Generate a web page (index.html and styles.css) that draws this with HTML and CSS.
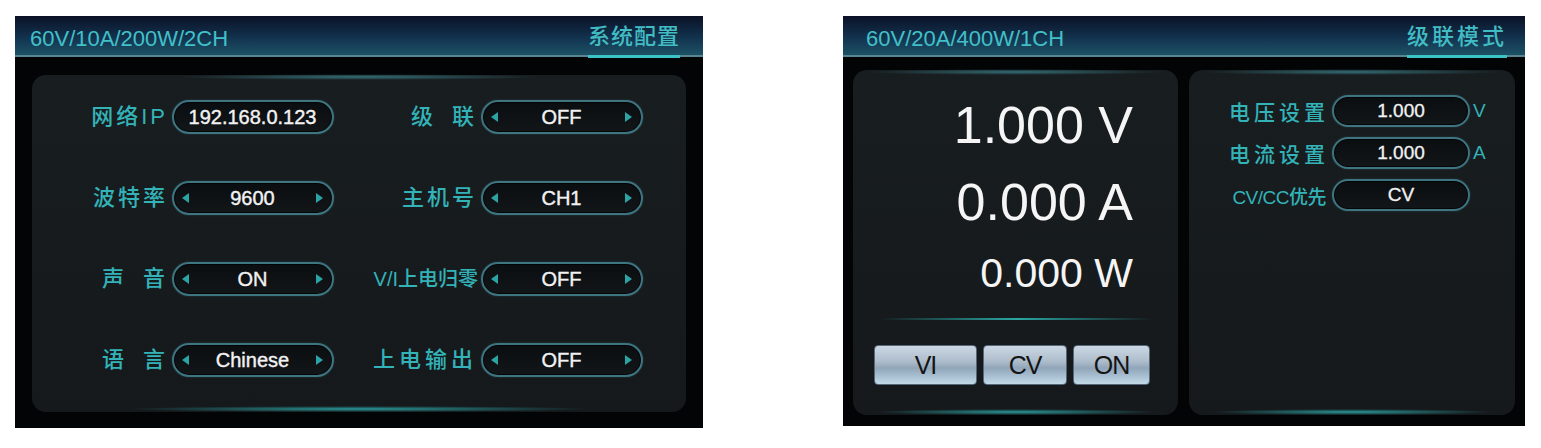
FILE: index.html
```html
<!DOCTYPE html>
<html lang="zh-CN">
<head>
    <meta charset="UTF-8">
    <title>电源界面</title>
    <link rel="stylesheet" href="styles.css">
</head>
<body>
<div class="screen screen-config">
    <div class="topbar">
        <span class="model">60V/10A/200W/2CH</span>
        <span class="page-title">系统配置</span>
    </div>
    <div class="panel config-panel">
        <div class="config-grid">
            <span class="label">网络IP</span>
            <div class="pill"><span class="value">192.168.0.123</span></div>
            <span class="label spaced">级 联</span>
            <div class="pill"><i class="arrow left"></i><span class="value">OFF</span><i class="arrow right"></i></div>

            <span class="label">波特率</span>
            <div class="pill"><i class="arrow left"></i><span class="value">9600</span><i class="arrow right"></i></div>
            <span class="label">主机号</span>
            <div class="pill"><i class="arrow left"></i><span class="value">CH1</span><i class="arrow right"></i></div>

            <span class="label spaced">声 音</span>
            <div class="pill"><i class="arrow left"></i><span class="value">ON</span><i class="arrow right"></i></div>
            <span class="label tight">V/I上电归零</span>
            <div class="pill"><i class="arrow left"></i><span class="value">OFF</span><i class="arrow right"></i></div>

            <span class="label spaced">语 言</span>
            <div class="pill"><i class="arrow left"></i><span class="value">Chinese</span><i class="arrow right"></i></div>
            <span class="label wide">上电输出</span>
            <div class="pill"><i class="arrow left"></i><span class="value">OFF</span><i class="arrow right"></i></div>
        </div>
    </div>
</div>

<div class="screen screen-cascade">
    <div class="topbar">
        <span class="model">60V/20A/400W/1CH</span>
        <span class="page-title">级联模式</span>
    </div>
    <div class="panes">
        <div class="panel readout">
            <div class="readings">
                <div class="reading big">1.000 V</div>
                <div class="reading big">0.000 A</div>
                <div class="reading small">0.000 W</div>
            </div>
            <div class="divider"></div>
            <div class="buttons">
                <button class="key key-vi">VI</button>
                <button class="key key-cv">CV</button>
                <button class="key key-on">ON</button>
            </div>
        </div>
        <div class="panel settings">
            <div class="set-grid">
                <span class="set-label">电压设置</span>
                <div class="box">1.000</div>
                <span class="unit">V</span>

                <span class="set-label">电流设置</span>
                <div class="box">1.000</div>
                <span class="unit">A</span>

                <span class="set-label compact">CV/CC优先</span>
                <div class="box">CV</div>
                <span class="unit"></span>
            </div>
        </div>
    </div>
</div>
</body>
</html>
```

FILE: styles.css
```css
body {
    margin: 0;
    padding: 16px 0 0 15px;
    background: #fff;
    display: flex;
    align-items: flex-start;
    gap: 140px;
    font-family: "Liberation Sans", "Noto Sans CJK SC", sans-serif;
}
.screen {
    background: #030405;
    display: flex;
    flex-direction: column;
}
.screen-config {
    width: 688px;
    height: 412px;
}
.screen-cascade {
    width: 682px;
    height: 410px;
}

/* top bar */
.topbar {
    height: 41px;
    flex: none;
    display: flex;
    justify-content: space-between;
    background: linear-gradient(#0a1126, #133450 55%, #1d5568);
    box-shadow: inset 0 -2px 0 #5a8692;
}
.screen-config .topbar {
    padding: 0 23px 0 15px;
}
.screen-cascade .topbar {
    padding: 0 18px 0 23px;
}
.model {
    padding-top: 12px;
    font-size: 22px;
    line-height: 22px;
    color: #42c0c8;
}
.page-title {
    box-sizing: border-box;
    height: 42px;
    padding-top: 10px;
    font-size: 22px;
    line-height: 22px;
    font-weight: 500;
    color: #42bcc3;
    border-bottom: 3px solid #3cc3c8;
    margin-bottom: -1px;
}
.screen-config .page-title {
    letter-spacing: 1px;
}
.screen-cascade .page-title {
    letter-spacing: 3px;
}

/* panels */
.panel {
    position: relative;
    background: linear-gradient(#181d20, #15191c);
    border-radius: 14px;
}
.panel::before {
    content: "";
    position: absolute;
    top: -1px;
    left: 22%;
    right: 22%;
    height: 6px;
    background: radial-gradient(ellipse at center, rgba(70, 165, 175, 0.6), rgba(70, 165, 175, 0) 70%);
}
.panel::after {
    content: "";
    position: absolute;
    bottom: 0;
    left: 14%;
    right: 14%;
    height: 6px;
    background: radial-gradient(ellipse at center, rgba(45, 175, 175, 0.85), rgba(45, 175, 175, 0) 70%);
}
.config-panel {
    flex: 1;
    margin: 18px 17px 16px;
}

/* config rows */
.config-grid {
    display: grid;
    grid-template-columns: 140px 162px 147px 162px;
    row-gap: 47px;
    padding-top: 25px;
    align-items: center;
}
.label {
    text-align: right;
    padding-right: 4px;
    font-size: 22px;
    line-height: 26px;
    font-weight: 500;
    letter-spacing: 3px;
    color: #33b3b8;
    white-space: nowrap;
}
.label.spaced {
    word-spacing: 7px;
}
.label.tight {
    font-size: 20px;
    letter-spacing: 0;
    padding-right: 3px;
}
.label.wide {
    letter-spacing: 4px;
}
.pill {
    box-sizing: border-box;
    height: 34px;
    border: 2px solid #3d7580;
    border-radius: 17px;
    background: linear-gradient(#0b0e11, #121619);
    box-shadow: inset 0 0 0 1px rgba(0, 0, 0, 0.7), 0 0 2px rgba(90, 150, 160, 0.35);
    display: flex;
    align-items: center;
    justify-content: center;
    padding: 0 9px 0 8px;
}
.pill .value {
    flex: 1;
    text-align: center;
    font-size: 20px;
    color: #f2f2f2;
    -webkit-text-stroke: 0.4px #f2f2f2;
}
.arrow {
    width: 0;
    height: 0;
    border-top: 5px solid transparent;
    border-bottom: 5px solid transparent;
}
.arrow.left {
    border-right: 7px solid #2ca3a4;
}
.arrow.right {
    border-left: 7px solid #2ca3a4;
}

/* cascade screen */
.panes {
    flex: 1;
    display: flex;
    gap: 11px;
    margin: 13px 10px 11px;
}
.readout {
    width: 325px;
}
.settings {
    width: 326px;
}
.panes .panel::before {
    left: 4%;
    right: 4%;
}
.panes .panel::after {
    left: 6%;
    right: 6%;
}
.readings {
    display: flex;
    flex-direction: column;
    gap: 25px;
    padding: 29px 45px 0 0;
    text-align: right;
    color: #f5f5f5;
}
.reading.big {
    font-size: 52px;
    line-height: 52px;
}
.reading.small {
    font-size: 41px;
    line-height: 41px;
}
.divider {
    height: 2px;
    margin: 24px 25px 0 27px;
    background: linear-gradient(90deg, rgba(40, 160, 160, 0), #2aa7a4 50%, rgba(40, 160, 160, 0));
}
.buttons {
    display: flex;
    gap: 6px;
    padding: 25px 0 0 21px;
}
.key {
    height: 40px;
    padding: 0;
    border: 1px solid #56677a;
    border-radius: 4px;
    background: linear-gradient(#cbd7e3, #aebdcc 40%, #91a5b9 58%, #a9c0d2 80%, #c2dbe8);
    font-family: "Liberation Sans", sans-serif;
    font-size: 25px;
    letter-spacing: -1px;
    color: #141414;
}
.key-vi {
    width: 103px;
}
.key-cv {
    width: 84px;
}
.key-on {
    width: 77px;
}

.set-grid {
    display: grid;
    grid-template-columns: 143px 138px auto;
    row-gap: 10px;
    padding-top: 25px;
    align-items: center;
}
.set-label {
    text-align: right;
    padding-right: 3px;
    font-size: 21px;
    font-weight: 500;
    letter-spacing: 4px;
    color: #33b3b8;
    white-space: nowrap;
}
.set-label.compact {
    font-size: 19px;
    letter-spacing: -0.5px;
    padding-right: 6px;
}
.box {
    box-sizing: border-box;
    height: 32px;
    border: 2px solid #3d7580;
    border-radius: 16px;
    background: linear-gradient(#0b0e11, #121619);
    box-shadow: inset 0 0 0 1px rgba(0, 0, 0, 0.7), 0 0 2px rgba(90, 150, 160, 0.35);
    text-align: center;
    font-size: 19px;
    line-height: 28px;
    color: #f2f2f2;
    -webkit-text-stroke: 0.3px #f2f2f2;
}
.unit {
    padding-left: 3px;
    font-size: 19px;
    color: #33b3b8;
}
```
